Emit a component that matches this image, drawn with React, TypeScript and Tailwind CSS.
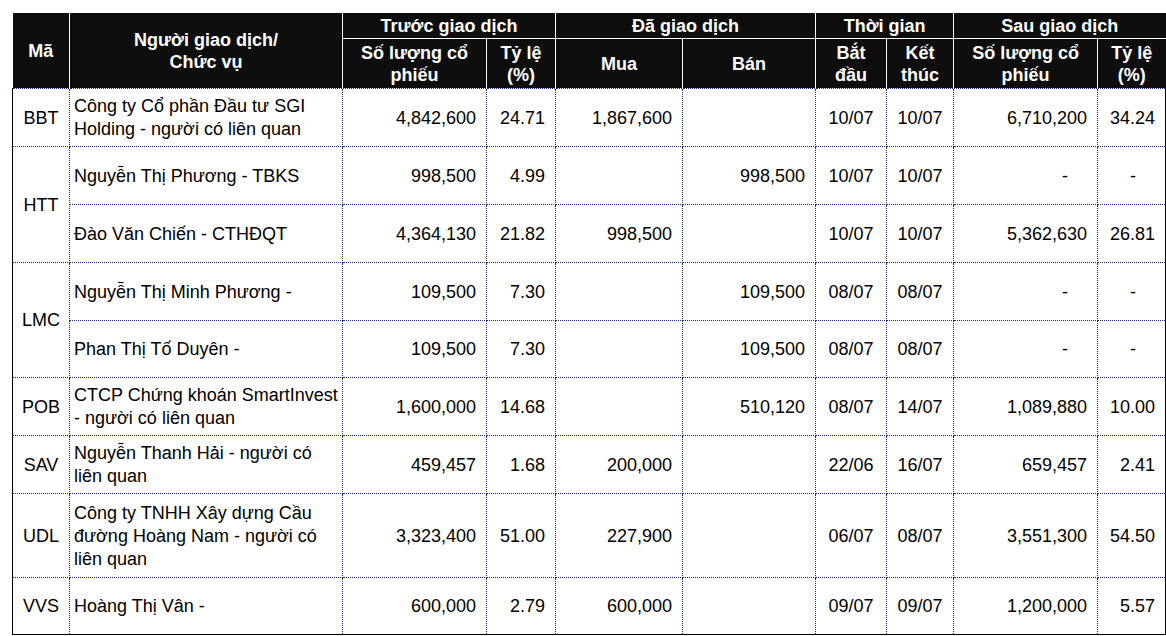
import React from "react";

type Row = {
  code?: string;
  span?: number;
  name: React.ReactNode;
  beforeQty: string;
  beforePct: string;
  buy: string;
  sell: string;
  start: string;
  end: string;
  afterQty: string;
  afterPct: string;
  h: string;
};

const ROWS: Row[] = [
  {
    code: "BBT",
    name: (
      <>
        Công ty Cổ phần Đầu tư SGI
        <br />
        Holding - người có liên quan
      </>
    ),
    beforeQty: "4,842,600",
    beforePct: "24.71",
    buy: "1,867,600",
    sell: "",
    start: "10/07",
    end: "10/07",
    afterQty: "6,710,200",
    afterPct: "34.24",
    h: "h-[58px]",
  },
  {
    code: "HTT",
    span: 2,
    name: "Nguyễn Thị Phương - TBKS",
    beforeQty: "998,500",
    beforePct: "4.99",
    buy: "",
    sell: "998,500",
    start: "10/07",
    end: "10/07",
    afterQty: "-",
    afterPct: "-",
    h: "h-[58px]",
  },
  {
    name: "Đào Văn Chiến - CTHĐQT",
    beforeQty: "4,364,130",
    beforePct: "21.82",
    buy: "998,500",
    sell: "",
    start: "10/07",
    end: "10/07",
    afterQty: "5,362,630",
    afterPct: "26.81",
    h: "h-[58px]",
  },
  {
    code: "LMC",
    span: 2,
    name: "Nguyễn Thị Minh Phương -",
    beforeQty: "109,500",
    beforePct: "7.30",
    buy: "",
    sell: "109,500",
    start: "08/07",
    end: "08/07",
    afterQty: "-",
    afterPct: "-",
    h: "h-[58px]",
  },
  {
    name: "Phan Thị Tố Duyên -",
    beforeQty: "109,500",
    beforePct: "7.30",
    buy: "",
    sell: "109,500",
    start: "08/07",
    end: "08/07",
    afterQty: "-",
    afterPct: "-",
    h: "h-[57px]",
  },
  {
    code: "POB",
    name: (
      <>
        CTCP Chứng khoán SmartInvest
        <br />- người có liên quan
      </>
    ),
    beforeQty: "1,600,000",
    beforePct: "14.68",
    buy: "",
    sell: "510,120",
    start: "08/07",
    end: "14/07",
    afterQty: "1,089,880",
    afterPct: "10.00",
    h: "h-[58px]",
  },
  {
    code: "SAV",
    name: (
      <>
        Nguyễn Thanh Hải - người có
        <br />
        liên quan
      </>
    ),
    beforeQty: "459,457",
    beforePct: "1.68",
    buy: "200,000",
    sell: "",
    start: "22/06",
    end: "16/07",
    afterQty: "659,457",
    afterPct: "2.41",
    h: "h-[58px]",
  },
  {
    code: "UDL",
    name: (
      <>
        Công ty TNHH Xây dựng Cầu
        <br />
        đường Hoàng Nam - người có
        <br />
        liên quan
      </>
    ),
    beforeQty: "3,323,400",
    beforePct: "51.00",
    buy: "227,900",
    sell: "",
    start: "06/07",
    end: "08/07",
    afterQty: "3,551,300",
    afterPct: "54.50",
    h: "h-[84px]",
  },
  {
    code: "VVS",
    name: "Hoàng Thị Vân -",
    beforeQty: "600,000",
    beforePct: "2.79",
    buy: "600,000",
    sell: "",
    start: "09/07",
    end: "09/07",
    afterQty: "1,200,000",
    afterPct: "5.57",
    h: "h-[57px]",
  },
];

const cell = "border border-dotted border-[#1c2b68] align-middle pt-[2px]";
const num = `${cell} text-right pr-[10px]`;
const dash = `${cell} text-right pr-[29px]`;
const th = "border-r border-white font-bold text-center align-middle pt-[1px]";

export default function App() {
  return (
    <div className="bg-white min-h-screen pt-[13px] pl-3 text-black font-['Liberation_Sans',Arial,sans-serif] text-[18px]">
      <table className="table-fixed border-collapse w-[1153px]">
        <colgroup>
          <col className="w-[57px]" />
          <col className="w-[273px]" />
          <col className="w-[144px]" />
          <col className="w-[69px]" />
          <col className="w-[127px]" />
          <col className="w-[133px]" />
          <col className="w-[71px]" />
          <col className="w-[67px]" />
          <col className="w-[144px]" />
          <col className="w-[68px]" />
        </colgroup>
        <thead className="bg-[#0e0e0e] text-white leading-[22px]">
          <tr className="h-[25px]">
            <th rowSpan={2} className={th}>
              Mã
            </th>
            <th rowSpan={2} className={th}>
              Người giao dịch/
              <br />
              Chức vụ
            </th>
            <th colSpan={2} className={`${th} border-b`}>
              Trước giao dịch
            </th>
            <th colSpan={2} className={`${th} border-b`}>
              Đã giao dịch
            </th>
            <th colSpan={2} className={`${th} border-b`}>
              Thời gian
            </th>
            <th colSpan={2} className="font-bold text-center align-middle pt-[1px] border-b border-white">
              Sau giao dịch
            </th>
          </tr>
          <tr className="h-[50px]">
            <th className={th}>
              Số lượng cổ
              <br />
              phiếu
            </th>
            <th className={th}>
              Tỷ lệ
              <br />
              (%)
            </th>
            <th className={th}>Mua</th>
            <th className={th}>Bán</th>
            <th className={th}>
              Bắt
              <br />
              đầu
            </th>
            <th className={th}>
              Kết
              <br />
              thúc
            </th>
            <th className={th}>
              Số lượng cổ
              <br />
              phiếu
            </th>
            <th className="font-bold text-center align-middle pt-[1px]">
              Tỷ lệ
              <br />
              (%)
            </th>
          </tr>
        </thead>
        <tbody className="leading-[23px]">
          {ROWS.map((r, i) => {
            const last = i === ROWS.length - 1;
            const bottom = last ? "border-b-black [border-bottom-style:solid]" : "";
            return (
              <tr key={i} className={r.h}>
                {r.code && (
                  <td
                    rowSpan={r.span ?? 1}
                    className={`${cell} text-center border-l-black [border-left-style:solid] ${bottom}`}
                  >
                    {r.code}
                  </td>
                )}
                <td className={`${cell} pl-[4px] whitespace-nowrap ${bottom}`}>{r.name}</td>
                <td className={`${num} ${bottom}`}>{r.beforeQty}</td>
                <td className={`${num} ${bottom}`}>{r.beforePct}</td>
                <td className={`${num} ${bottom}`}>{r.buy}</td>
                <td className={`${num} ${bottom}`}>{r.sell}</td>
                <td className={`${cell} text-center ${bottom}`}>{r.start}</td>
                <td className={`${cell} text-center ${bottom}`}>{r.end}</td>
                <td className={`${r.afterQty === "-" ? dash : num} ${bottom}`}>{r.afterQty}</td>
                <td
                  className={`${r.afterPct === "-" ? dash : num} border-r-black [border-right-style:solid] ${bottom}`}
                >
                  {r.afterPct}
                </td>
              </tr>
            );
          })}
        </tbody>
      </table>
    </div>
  );
}
